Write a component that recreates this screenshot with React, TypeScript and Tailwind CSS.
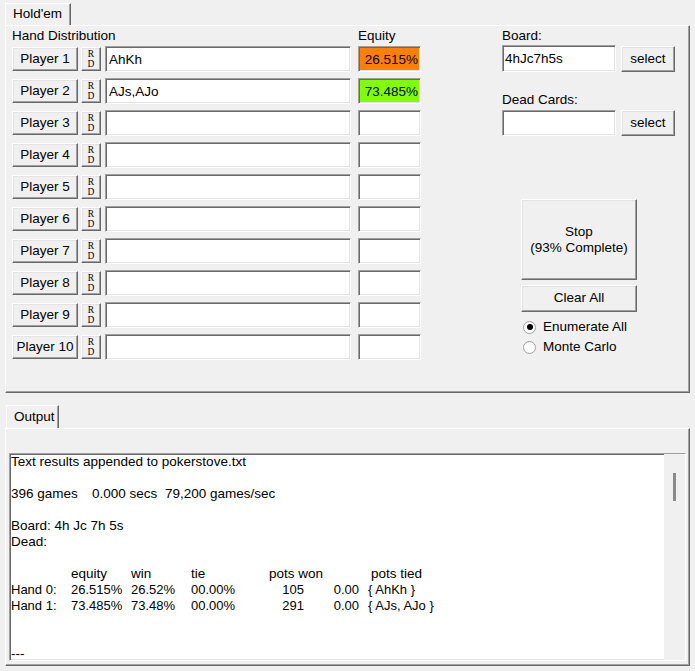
import React from "react";

const raised =
  "border border-t-white border-l-white border-b-[#696969] border-r-[#696969] shadow-[inset_-1px_-1px_0_#a0a0a0,inset_1px_1px_0_#e3e3e3] bg-[#f0f0f0]";
const sunken =
  "border border-t-[#a0a0a0] border-l-[#a0a0a0] border-b-white border-r-white shadow-[inset_1px_1px_0_#696969,inset_-1px_-1px_0_#e3e3e3]";
const panel =
  "border border-t-white border-l-white border-b-[#696969] border-r-[#696969] shadow-[inset_-1px_-1px_0_#a0a0a0]";

const players = [
  { name: "Player 1", hand: "AhKh", eq: "26.515%", bg: "bg-[#ff8000]" },
  { name: "Player 2", hand: "AJs,AJo", eq: "73.485%", bg: "bg-[#80ff00]" },
  { name: "Player 3", hand: "", eq: "", bg: "bg-white" },
  { name: "Player 4", hand: "", eq: "", bg: "bg-white" },
  { name: "Player 5", hand: "", eq: "", bg: "bg-white" },
  { name: "Player 6", hand: "", eq: "", bg: "bg-white" },
  { name: "Player 7", hand: "", eq: "", bg: "bg-white" },
  { name: "Player 8", hand: "", eq: "", bg: "bg-white" },
  { name: "Player 9", hand: "", eq: "", bg: "bg-white" },
  { name: "Player 10", hand: "", eq: "", bg: "bg-white" },
];

function Tab({ label }: { label: string }) {
  return (
    <div className="flex h-[23px] items-center border-t border-l border-r border-t-white border-l-white border-r-[#696969] pl-[7px] shadow-[inset_-1px_0_0_#a0a0a0]">
      {label}
    </div>
  );
}

function Radio({ label, checked }: { label: string; checked?: boolean }) {
  return (
    <div className="flex h-[16px] items-center">
      <span className="ml-[2px] flex h-[13px] w-[13px] items-center justify-center rounded-full border border-[#a0a0a0] bg-white">
        {checked && <span className="h-[6px] w-[6px] rounded-full bg-black" />}
      </span>
      <span className="ml-[7px]">{label}</span>
    </div>
  );
}

export default function App() {
  return (
    <div
      className="h-[671px] w-[695px] overflow-hidden bg-[#f0f0f0] pt-[3px] text-[13.5px] text-black"
      style={{ fontFamily: '"Liberation Sans", Arial, sans-serif' }}
    >
      <div className="ml-[5px] w-[66px]">
        <div className="flex h-[22px] items-center border-t border-l border-r border-t-white border-l-white border-r-[#696969] pl-[7px] shadow-[inset_-1px_0_0_#a0a0a0]">
          Hold'em
        </div>
      </div>

      <div className={`mx-[5px] flex h-[368px] px-[6px] pt-[2px] ${panel}`}>
        <div className="w-[410px]">
          <div className="flex h-[16px] items-center">
            <span className="w-[346px]">Hand Distribution</span>
            <span>Equity</span>
          </div>
          <div className="mt-[2px] flex flex-col gap-[6px]">
            {players.map((p) => (
              <div key={p.name} className="flex h-[26px] items-center">
                <div className={`flex h-[24px] w-[66px] items-center justify-center ${raised}`}>
                  {p.name}
                </div>
                <div
                  className={`ml-[3px] flex h-[24px] w-[20px] flex-col items-center justify-center text-[9.5px] leading-[10px] ${raised}`}
                  style={{ fontFamily: '"Liberation Serif", serif' }}
                >
                  <span>R</span>
                  <span>D</span>
                </div>
                <div className={`ml-[4px] flex h-[26px] w-[246px] items-start bg-white pl-[3px] pt-[3px] ${sunken}`}>
                  {p.hand}
                </div>
                <div
                  className={`ml-[7px] flex h-[26px] w-[63px] items-start justify-end pr-[2px] pt-[3px] ${p.bg} ${sunken}`}
                >
                  {p.eq}
                </div>
              </div>
            ))}
          </div>
        </div>

        <div className="ml-[80px] flex w-[175px] flex-col">
          <div className="flex h-[16px] items-center">Board:</div>
          <div className="mt-[1px] flex items-start">
            <div className={`flex h-[27px] w-[114px] items-start bg-white pl-[2px] pt-[3px] ${sunken}`}>
              4hJc7h5s
            </div>
            <div className={`ml-[5px] mt-[1px] flex h-[26px] w-[54px] items-center justify-center ${raised}`}>
              select
            </div>
          </div>
          <div className="mt-[20px] flex h-[16px] items-center">Dead Cards:</div>
          <div className="mt-[2px] flex items-start">
            <div className={`h-[26px] w-[114px] bg-white ${sunken}`} />
            <div className={`ml-[5px] flex h-[26px] w-[54px] items-center justify-center ${raised}`}>
              select
            </div>
          </div>
          <div className="ml-[19px] mt-[63px] flex w-[116px] flex-col">
            <div className={`flex h-[81px] flex-col items-center justify-center leading-[16px] ${raised}`}>
              <span>Stop</span>
              <span>(93% Complete)</span>
            </div>
            <div className={`mt-[5px] flex h-[27px] items-center justify-center ${raised}`}>
              Clear All
            </div>
            <div className="mt-[7px] flex flex-col gap-[4px]">
              <Radio label="Enumerate All" checked />
              <Radio label="Monte Carlo" />
            </div>
          </div>
        </div>
      </div>

      <div className="ml-[6px] mt-[12px] w-[53px]">
        <Tab label="Output" />
      </div>

      <div className={`mx-[5px] h-[238px] pl-[3px] pr-[3px] pt-[24px] ${panel}`}>
        <div className={`flex h-[208px] bg-white ${sunken}`}>
          <div className="flex-1 overflow-hidden pl-[1px] leading-[16px]">
            <div>Text results appended to pokerstove.txt</div>
            <div>&nbsp;</div>
            <div className="flex">
              <span className="w-[81px]">396 games</span>
              <span className="w-[73px]">0.000 secs</span>
              <span>79,200 games/sec</span>
            </div>
            <div>&nbsp;</div>
            <div>Board: 4h Jc 7h 5s</div>
            <div>Dead:</div>
            <div>&nbsp;</div>
            <div className="flex">
              <span className="w-[60px]" />
              <span className="w-[60px]">equity</span>
              <span className="w-[60px]">win</span>
              <span className="w-[78px]">tie</span>
              <span className="w-[102px]">pots won</span>
              <span>pots tied</span>
            </div>
            {[
              ["Hand 0:", "26.515%", "26.52%", "00.00%", "105", "0.00", "{ AhKh }"],
              ["Hand 1:", "73.485%", "73.48%", "00.00%", "291", "0.00", "{ AJs, AJo }"],
            ].map((r) => (
              <div key={r[0]} className="flex text-[13px]">
                <span className="w-[60px]">{r[0]}</span>
                <span className="w-[60px]">{r[1]}</span>
                <span className="w-[60px]">{r[2]}</span>
                <span className="w-[60px]">{r[3]}</span>
                <span className="w-[53px] text-right">{r[4]}</span>
                <span className="w-[55px] text-right">{r[5]}</span>
                <span className="ml-[9px]">{r[6]}</span>
              </div>
            ))}
            <div>&nbsp;</div>
            <div>&nbsp;</div>
            <div>---</div>
          </div>
          <div className="flex w-[21px] justify-center bg-[#f0f0f0] pt-[19px]">
            <div className="h-[28px] w-[3px] bg-[#8a8a8a]" />
          </div>
        </div>
      </div>
    </div>
  );
}
